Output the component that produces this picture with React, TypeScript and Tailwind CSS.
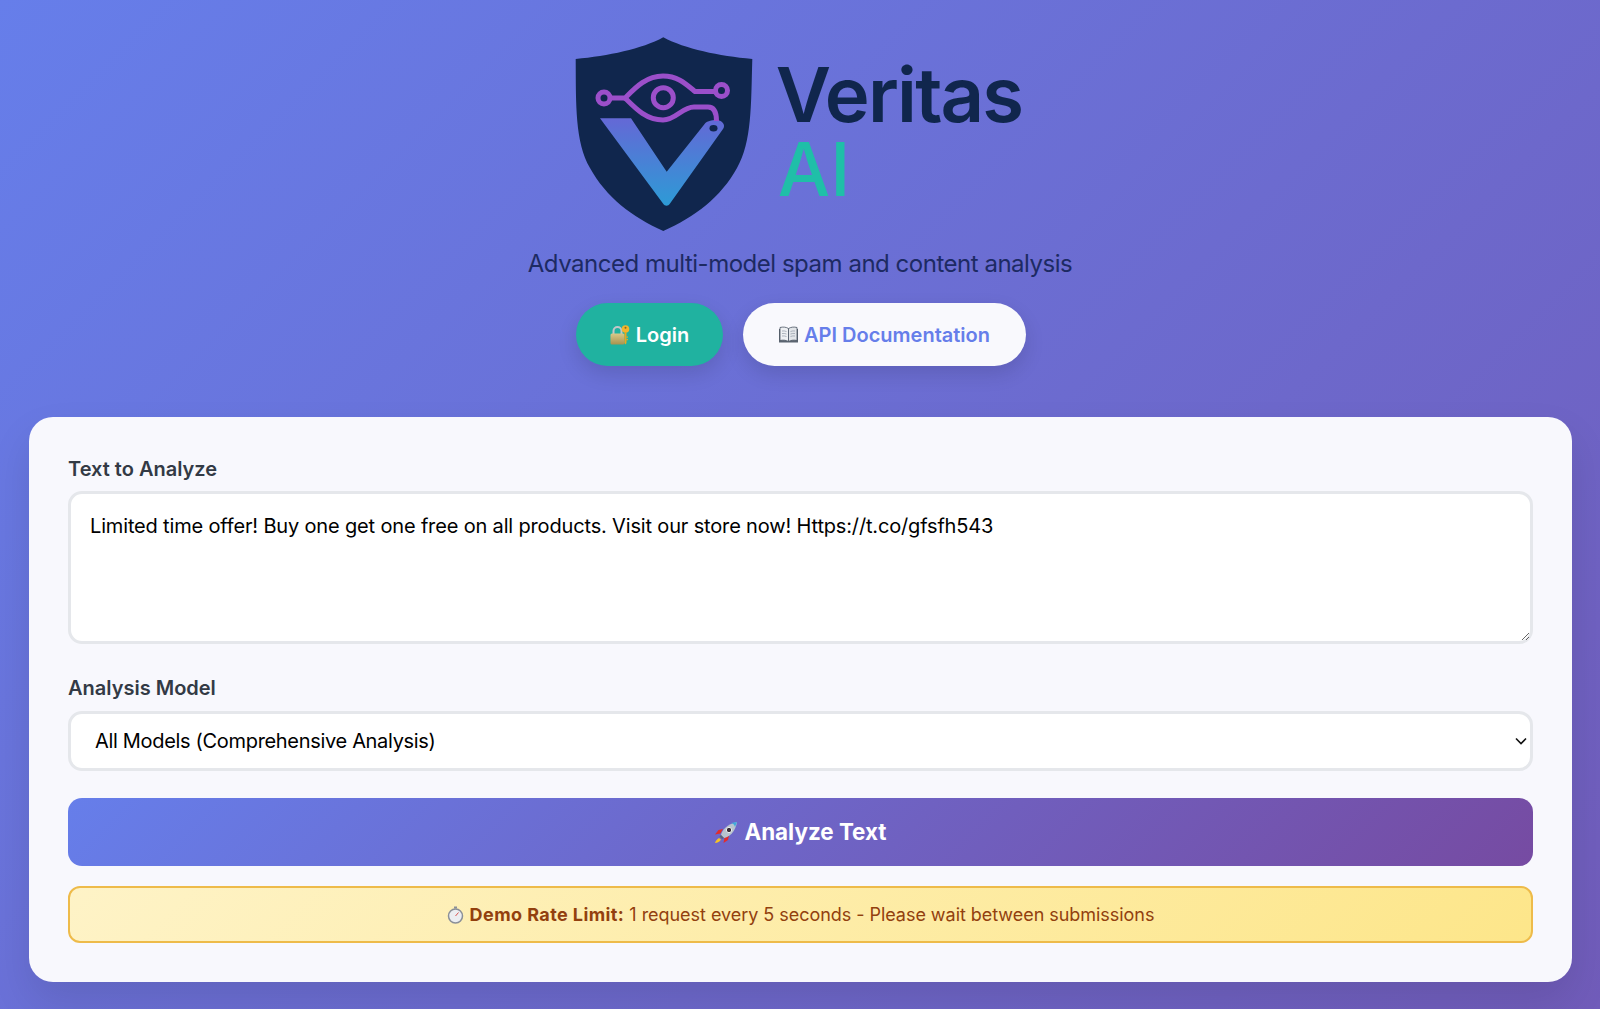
const LoginIcon = () => (
  <svg width="22" height="22" viewBox="0 0 22 22" className="shrink-0">
    <defs>
      <linearGradient id="lockBody" x1="0" y1="0" x2="0" y2="1">
        <stop offset="0" stopColor="#d8c98a" />
        <stop offset="1" stopColor="#a8934f" />
      </linearGradient>
    </defs>
    <path d="M4.500 10V7a4 4 0 0 1 8 0v3" fill="none" stroke="#c3c6c8" strokeWidth="2" />
    <rect x="1.500" y="9.500" width="14" height="11" rx="1.500" fill="url(#lockBody)" />
    <circle cx="16.500" cy="5" r="3.800" fill="#f2b52c" />
    <circle cx="16.500" cy="3.800" r="1" fill="#8a6a1a" />
    <path d="M15.500 8h2v11l-1 1.500-1-1.500z" fill="#e8a820" />
    <path d="M17.500 12.500h1.500v1.200h-1.500zM17.500 15h1.500v1.200h-1.500z" fill="#e8a820" />
  </svg>
);

const BookIcon = () => (
  <svg width="21" height="20" viewBox="0 0 21 20" className="shrink-0">
    <path d="M1 4h19v13.500H1z" fill="#5b6470" />
    <path d="M2 2.500c3-.8 6-.5 8.500 1v13c-2.500-1.400-5.500-1.700-8.500-1z" fill="#eef0f3" stroke="#4b5563" strokeWidth=".8" />
    <path d="M19 2.500c-3-.8-6-.5-8.500 1v13c2.500-1.400 5.500-1.700 8.500-1z" fill="#e2e5e9" stroke="#4b5563" strokeWidth=".8" />
    <path d="M4 6c1.500-.2 3-.1 4.500.5M4 8.500c1.500-.2 3-.1 4.500.5M4 11c1.500-.2 3-.1 4.500.5M17 6c-1.500-.2-3-.1-4.500.5M17 8.500c-1.500-.2-3-.1-4.500.5M17 11c-1.500-.2-3-.1-4.500.5" stroke="#9ca3af" strokeWidth=".8" fill="none" />
  </svg>
);

const RocketIcon = () => (
  <svg width="24" height="24" viewBox="0 0 24 24" className="shrink-0">
    <path d="M5 18c-2 1-3.500 3-4 5 2.500 0 5-1.500 6-3.500z" fill="#f7c325" />
    <path d="M6.500 13.500 1 14.500 4.500 10l4.500-1zM10.500 17.500 9.500 23l4.500-3 1-4.500z" fill="#e02d2d" />
    <path d="M7 15c1-5 6-11 16-13-1.500 10-8 15-13 16z" fill="#b8c4cf" />
    <path d="M17 3c2 .2 3.500 2 4 4l2-5z" fill="#3fa9dc" />
    <path d="M7 15l3 3-2 1-2.500-2.500z" fill="#5b6675" />
    <circle cx="15" cy="10" r="2.700" fill="#3a2f3a" stroke="#e8edf1" strokeWidth="1" />
  </svg>
);

const TimerIcon = () => (
  <svg width="17" height="18" viewBox="0 0 17 18" className="shrink-0">
    <rect x="7" y=".5" width="3" height="2" fill="#8a8f98" />
    <circle cx="8.500" cy="10" r="7" fill="#eceef1" stroke="#8a8f98" strokeWidth="1.500" />
    <path d="M8.500 10 11.500 6.500" stroke="#d9534f" strokeWidth="1" />
  </svg>
);

const Logo = () => (
  <svg width="190" height="205" viewBox="0 0 190 205" className="shrink-0">
    <defs>
      <linearGradient id="vee" x1="0" y1="0" x2="0" y2="1">
        <stop offset="0" stopColor="#6468d6" />
        <stop offset="1" stopColor="#2d9bd6" />
      </linearGradient>
    </defs>
    <path
      d="M93.300 7.300C72 19 38 26 5.700 29C6 75 5 112 20 138C36 167 62 187 93.300 201C125 187 151 167 167 138C182 112 181 75 182.300 29C149 26 115 19 93.300 7.300Z"
      fill="#10264d"
    />
    <path
      d="M30 88.300H61L96.700 141.700L135 93.500C137 91 146 89 150 90.700C154 92.500 155 96 153 99L100 173.500C98 176.500 95 176.500 93 173.500Z"
      fill="url(#vee)"
    />
    <ellipse cx="143.500" cy="98.300" rx="4" ry="3.300" fill="#10264d" />
    <g fill="none" stroke="#9b4fca" strokeWidth="5">
      <circle cx="34" cy="68" r="6" />
      <circle cx="151.500" cy="60.500" r="6" />
      <circle cx="93.300" cy="67.700" r="10" />
      <path d="M40 68H55C65 58 76 46 93 46C108 46 116 54 125 61.500H145" />
      <path d="M55 68C65 78 76 90 93 90C106 90 112 77 124 77H138C144 77 146.500 82 146.500 91" />
    </g>
  </svg>
);

export default function App() {
  return (
    <div className="h-screen overflow-hidden bg-[#6a5fc0] bg-[linear-gradient(135deg,#667eea_0%,#764ba2_100%)] bg-[length:100%_2300px] bg-no-repeat font-['Inter',sans-serif]">
      <header className="flex flex-col items-center pt-[30px]">
        <div className="flex h-[205px] items-center pr-[8px]">
          <Logo />
          <div className="ml-[16px] mt-[-4px] flex flex-col">
            <span className="text-[76px] font-semibold leading-[76px] tracking-[-1.8px] text-[#10264d]">Veritas</span>
            <span className="ml-[2px] text-[74px] font-medium leading-[74px] text-[#1fbfa8]">AI</span>
          </div>
        </div>
        <p className="mt-[14px] text-[24px] leading-[29px] tracking-[-0.48px] text-[#1d2a63]">Advanced multi-model spam and content analysis</p>
        <div className="ml-[1px] mt-[25px] flex gap-5">
          <a className="flex h-[63px] w-[147px] items-center justify-center gap-[5px] rounded-full bg-[#20b2a0] text-[20px] font-semibold text-white shadow-[0_8px_20px_rgba(0,0,0,0.12)]">
            <LoginIcon />
            Login
          </a>
          <a className="flex h-[63px] w-[283px] items-center justify-center gap-[5px] rounded-full bg-[#f9f9fd] text-[20px] font-semibold text-[#667eea] shadow-[0_8px_20px_rgba(0,0,0,0.12)]">
            <BookIcon />
            API Documentation
          </a>
        </div>
      </header>

      <main className="ml-[29px] mr-[28px] mt-[51px] rounded-[24px] bg-[#f8f8fd] px-[39px] pb-[39px] pt-[40px] shadow-[0_20px_40px_rgba(0,0,0,0.1)]">
        <label className="block text-[20px] font-semibold leading-[24px] text-[#333a45]">Text to Analyze</label>
        <textarea
          className="mt-[10px] block h-[153px] w-full rounded-[14px] border-[3px] border-[#e5e7eb] bg-white px-[19px] pb-[14px] pt-[20px] text-[20px] leading-[24px] tracking-[-0.16px] text-black outline-none"
          defaultValue="Limited time offer! Buy one get one free on all products. Visit our store now! Https://t.co/gfsfh543"
        />
        <label className="mt-[32px] block text-[20px] font-semibold leading-[24px] text-[#333a45]">Analysis Model</label>
        <div className="relative mt-[11px]">
          <select className="block h-[60px] w-full appearance-none rounded-[14px] border-[3px] border-[#e5e7eb] bg-white px-[24px] text-[20px] tracking-[-0.32px] text-black outline-none">
            <option>All Models (Comprehensive Analysis)</option>
          </select>
          <svg width="12" height="8" viewBox="0 0 12 8" className="pointer-events-none absolute right-[6px] top-[26px]">
            <path d="M1 1.500 6 6.500 11 1.500" fill="none" stroke="#111" strokeWidth="1.600" />
          </svg>
        </div>
        <button className="mt-[27px] flex h-[68px] w-full items-center justify-center gap-[6px] rounded-[14px] bg-[linear-gradient(135deg,#667eea_0%,#764ba2_100%)] text-[22.4px] font-bold text-white">
          <RocketIcon />
          Analyze Text
        </button>
        <div className="mt-[20px] flex h-[57px] items-center justify-center gap-[6px] rounded-[12px] border-2 border-[#eebb4a] bg-[linear-gradient(135deg,#fef3c7_0%,#fde68a_100%)] text-[18px] text-[#92400e]">
          <TimerIcon />
          <span className="tracking-[-0.04px]">
            <strong className="font-bold tracking-[0.42px]">Demo Rate Limit:</strong> 1 request every 5 seconds - Please wait between submissions
          </span>
        </div>
      </main>
    </div>
  );
}
